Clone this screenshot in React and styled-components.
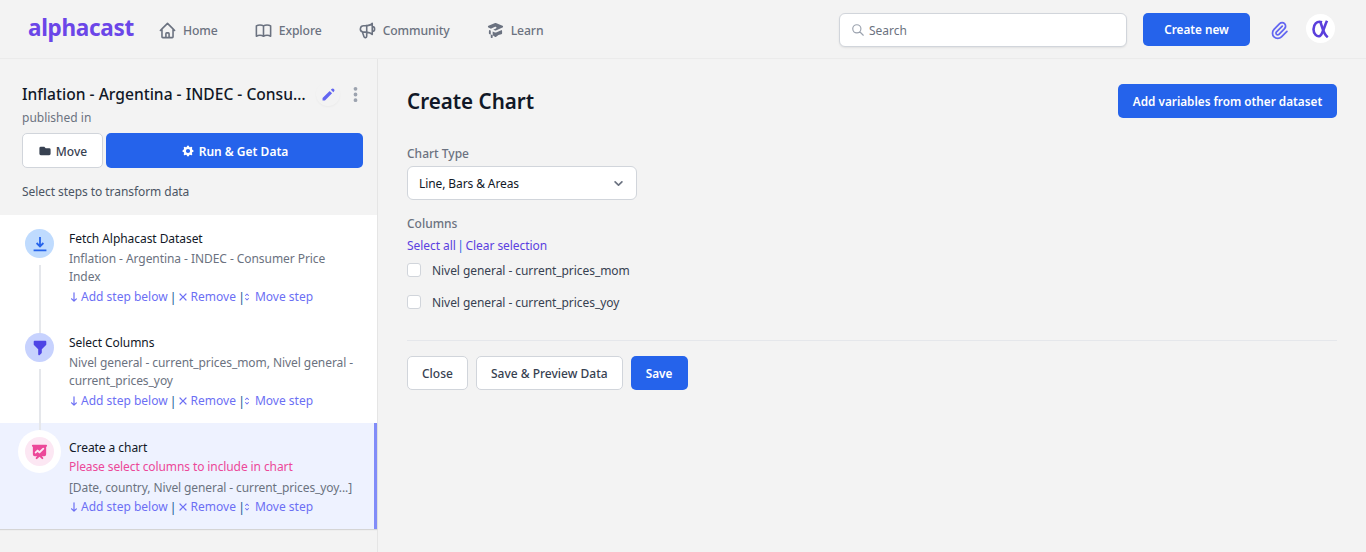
import React from 'react';
import styled, { createGlobalStyle } from 'styled-components';
import {
  HiOutlineHome,
  HiOutlineBookOpen,
  HiOutlineSpeakerphone,
  HiAcademicCap,
  HiOutlineSearch,
  HiOutlinePaperClip,
  HiPencil,
  HiDotsVertical,
  HiFolder,
  HiCog,
  HiFilter,
  HiPresentationChartLine,
  HiChevronDown,
  HiArrowNarrowDown,
  HiX,
  HiSelector,
} from 'react-icons/hi';

const GlobalStyle = createGlobalStyle`
  * { box-sizing: border-box; }
  html, body { margin: 0; height: 100%; }
  body {
    background: #f3f3f3;
    color: #111827;
    font-family: "Noto Sans", "Open Sans", sans-serif;
    font-size: 12px;
  }
`;

const navItems = [
  { label: 'Home', icon: HiOutlineHome },
  { label: 'Explore', icon: HiOutlineBookOpen },
  { label: 'Community', icon: HiOutlineSpeakerphone },
  { label: 'Learn', icon: HiAcademicCap },
];

const steps = [
  {
    title: 'Fetch Alphacast Dataset',
    detail: 'Inflation - Argentina - INDEC - Consumer Price Index',
    tone: 'blue',
  },
  {
    title: 'Select Columns',
    detail: 'Nivel general - current_prices_mom, Nivel general - current_prices_yoy',
    tone: 'indigo',
  },
  {
    title: 'Create a chart',
    warning: 'Please select columns to include in chart',
    detail: '[Date, country, Nivel general - current_prices_yoy...]',
    tone: 'pink',
    active: true,
  },
];

const columns = ['Nivel general - current_prices_mom', 'Nivel general - current_prices_yoy'];

const StepIcon = ({ tone }) => {
  if (tone === 'blue') {
    return (
      <svg width="16" height="16" viewBox="0 0 16 16" fill="none" stroke="currentColor" strokeWidth="1.8">
        <path d="M8 1v9.2M4.6 7 8 10.4 11.4 7M1.6 14.4h12.8" />
      </svg>
    );
  }
  if (tone === 'indigo') return <HiFilter size={18} />;
  return <HiPresentationChartLine size={19} />;
};

const App = () => (
  <Page>
    <GlobalStyle />
    <Header>
      <Logo>alphacast</Logo>
      <Nav>
        {navItems.map(({ label, icon: Icon }) => (
          <NavLink key={label}>
            <Icon size={19} />
            {label}
          </NavLink>
        ))}
      </Nav>
      <HeaderRight>
        <SearchBox>
          <HiOutlineSearch size={14} />
          <span>Search</span>
        </SearchBox>
        <CreateButton $width="107px" $height="33px">Create new</CreateButton>
        <ClipButton>
          <HiOutlinePaperClip size={21} />
        </ClipButton>
        <Avatar>
          <svg width="17" height="18" viewBox="0 0 17 18" fill="none" stroke="currentColor" strokeWidth="2.6">
            <path d="M10 2.2C4.5.4 1.5 4.8 1.5 9.2c0 5 3.6 8 6.4 6.8C10.5 15 12 7 15 .8" />
            <path d="M8.2 1.6c2 4 2.6 12 7.6 15.6" />
          </svg>
        </Avatar>
      </HeaderRight>
    </Header>
    <Body>
      <Sidebar>
        <SidebarTop>
          <TitleRow>
            <Title>Inflation - Argentina - INDEC - Consumer Price Index</Title>
            <EditButton>
              <HiPencil size={17} />
            </EditButton>
            <MoreButton>
              <HiDotsVertical size={19} />
            </MoreButton>
          </TitleRow>
          <Published>published in</Published>
          <ActionRow>
            <MoveButton>
              <HiFolder size={14} />
              Move
            </MoveButton>
            <RunButton>
              <HiCog size={14} />
              Run &amp; Get Data
            </RunButton>
          </ActionRow>
          <Hint>Select steps to transform data</Hint>
        </SidebarTop>
        <StepList>
          {steps.map((step, i) => (
            <Step key={step.title} $active={step.active}>
              <StepRail>
                <StepCircle $tone={step.tone} $active={step.active}>
                  <StepIcon tone={step.tone} />
                </StepCircle>
                {i < steps.length - 1 && <RailLine />}
              </StepRail>
              <StepBody $active={step.active}>
                <StepTitle>{step.title}</StepTitle>
                {step.warning && <StepWarning>{step.warning}</StepWarning>}
                <StepDetail $active={step.active}>{step.detail}</StepDetail>
                <StepLinks $active={step.active}>
                  <DownIcon size={12} />
                  <AddText>Add step below</AddText>
                  <Divider>|</Divider>
                  <RemoveIcon size={12} />
                  <RemoveText>Remove</RemoveText>
                  <Divider>|</Divider>
                  <MoveIcon size={10} />
                  <MoveText>Move step</MoveText>
                </StepLinks>
              </StepBody>
            </Step>
          ))}
        </StepList>
      </Sidebar>
      <Main>
        <MainHead>
          <Heading>Create Chart</Heading>
          <PrimaryButton $width="219px" $height="34px">Add variables from other dataset</PrimaryButton>
        </MainHead>
        <FieldLabel>Chart Type</FieldLabel>
        <SelectBox>
          Line, Bars &amp; Areas
          <HiChevronDown size={17} />
        </SelectBox>
        <ColumnsLabel>Columns</ColumnsLabel>
        <SelectLinks>
          <a>Select all</a>
          <b>|</b>
          <a>Clear selection</a>
        </SelectLinks>
        <ColumnList>
          {columns.map((name) => (
            <ColumnRow key={name}>
              <Check />
              {name}
            </ColumnRow>
          ))}
        </ColumnList>
        <Rule />
        <Footer>
          <GhostButton>Close</GhostButton>
          <GhostButton>Save &amp; Preview Data</GhostButton>
          <PrimaryButton $width="57px" $height="34px">Save</PrimaryButton>
        </Footer>
      </Main>
    </Body>
  </Page>
);

const Page = styled.div`
  height: 552px;
  overflow: hidden;
  display: flex;
  flex-direction: column;
`;

const Header = styled.header`
  height: 59px;
  flex: none;
  display: flex;
  align-items: center;
  padding: 2px 31px 0 28px;
  border-bottom: 1px solid #ebebeb;
`;

const Logo = styled.div`
  width: 130px;
  margin-top: -6px;
  color: #6b46e8;
  font-size: 22.5px;
  font-weight: 700;
  letter-spacing: -0.3px;
`;

const Nav = styled.nav`
  display: flex;
  gap: 36px;
`;

const NavLink = styled.a`
  display: flex;
  align-items: center;
  gap: 6px;
  color: #6b7280;
  font-size: 12.2px;
  font-weight: 500;
  letter-spacing: -0.1px;

  svg {
    color: #6b7280;
  }
`;

const HeaderRight = styled.div`
  margin-left: auto;
  display: flex;
  align-items: center;
`;

const SearchBox = styled.div`
  width: 288px;
  height: 34px;
  margin-right: 16px;
  padding: 0 11px;
  display: flex;
  align-items: center;
  gap: 4px;
  background: #fff;
  border: 1px solid #d1d5db;
  border-radius: 6px;
  box-shadow: 0 1px 2px rgba(0, 0, 0, 0.08);
  color: #6b7280;
  font-size: 12px;

  svg {
    color: #9ca3af;
  }
`;

const PrimaryButton = styled.button`
  width: ${(p) => p.$width};
  height: ${(p) => p.$height};
  padding: 0;
  flex: none;
  border: 0;
  border-radius: 5px;
  background: #2563eb;
  color: #fff;
  font-family: inherit;
  font-size: 11.75px;
  font-weight: 600;
`;

const CreateButton = styled(PrimaryButton)`
  margin-top: -2px;
`;

const ClipButton = styled.span`
  width: 21px;
  margin-left: 19px;
  display: flex;
  color: #6366f1;
`;

const Avatar = styled.div`
  width: 29px;
  height: 29px;
  margin-left: 16px;
  margin-top: -3px;
  display: flex;
  align-items: center;
  justify-content: center;
  border-radius: 50%;
  background: #fff;
  color: #5b3fdc;
`;

const Body = styled.div`
  flex: 1;
  display: flex;
  min-height: 0;
`;

const Sidebar = styled.aside`
  width: 378px;
  flex: none;
  border-right: 1px solid #e5e5e5;
`;

const SidebarTop = styled.div`
  height: 156px;
  padding: 24px 12px 0 22px;
`;

const TitleRow = styled.div`
  height: 22px;
  display: flex;
  align-items: center;
`;

const Title = styled.h1`
  width: 289px;
  margin: 0;
  overflow: hidden;
  white-space: nowrap;
  text-overflow: ellipsis;
  color: #111827;
  font-size: 15.6px;
  font-weight: 500;
`;

const EditButton = styled.span`
  width: 24px;
  height: 24px;
  margin-left: 5px;
  display: flex;
  align-items: center;
  justify-content: center;
  border-radius: 50%;
  box-shadow: 0 1px 2px rgba(0, 0, 0, 0.04);
  color: #6366f1;
`;

const MoreButton = styled.span`
  margin-left: 6px;
  display: flex;
  color: #9ca3af;
`;

const Published = styled.div`
  margin-top: 4px;
  color: #6b7280;
  font-size: 12px;
  line-height: 17px;
`;

const ActionRow = styled.div`
  margin-top: 7px;
  display: flex;
  gap: 3px;
`;

const MoveButton = styled.button`
  width: 81px;
  height: 35px;
  padding: 1px 0 0;
  display: flex;
  align-items: center;
  justify-content: center;
  gap: 4px;
  background: #fff;
  border: 1px solid #d1d5db;
  border-radius: 5px;
  color: #374151;
  font-family: inherit;
  font-size: 12px;
  font-weight: 500;
`;

const RunButton = styled.button`
  width: 257px;
  height: 35px;
  padding: 1px 0 0;
  display: flex;
  align-items: center;
  justify-content: center;
  gap: 4px;
  background: #2563eb;
  border: 0;
  border-radius: 5px;
  color: #fff;
  font-family: inherit;
  font-size: 12px;
  font-weight: 600;
`;

const Hint = styled.p`
  margin: 15px 0 0;
  color: #4b5563;
  font-size: 12px;
  line-height: 17px;
  letter-spacing: -0.06px;
`;

const StepList = styled.div`
  background: #fff;
`;

const Step = styled.div`
  display: flex;
  height: ${(p) => (p.$active ? '106px' : '104px')};
  padding: 14px 0 0 25px;
  background: ${(p) => (p.$active ? '#eef2ff' : '#fff')};
  border-right: ${(p) => (p.$active ? '3px solid #818cf8' : '0')};
  box-shadow: ${(p) => (p.$active ? '0 1px 1px rgba(0, 0, 0, 0.12)' : 'none')};
`;

const StepRail = styled.div`
  position: relative;
  width: 29px;
  flex: none;
`;

const toneStyles = {
  blue: 'background: #bfdbfe; color: #2563eb;',
  indigo: 'background: #c7d2fe; color: #4f46e5;',
  pink: 'background: #fce7f3; color: #ec4899;',
};

const StepCircle = styled.div`
  position: relative;
  z-index: 1;
  width: 29px;
  height: 29px;
  display: flex;
  align-items: center;
  justify-content: center;
  border-radius: 50%;
  ${(p) => toneStyles[p.$tone]}
  ${(p) => p.$active && 'box-shadow: 0 0 0 7px #fff;'}
`;

const RailLine = styled.div`
  position: absolute;
  z-index: 0;
  top: 36px;
  left: 13.5px;
  width: 2px;
  height: 88px;
  background: #e5e7eb;
`;

const StepBody = styled.div`
  margin-left: 15px;
  margin-top: ${(p) => (p.$active ? '1px' : '0')};
  width: 290px;
  font-size: 12px;
  line-height: 18px;
  letter-spacing: -0.06px;
`;

const StepTitle = styled.div`
  margin-top: 1px;
  margin-bottom: 2px;
  color: #111827;
`;

const StepWarning = styled.div`
  margin: -1px 0 3px;
  color: #ec4899;
  letter-spacing: -0.1px;
`;

const StepDetail = styled.div`
  color: #6b7280;
  white-space: normal;
  letter-spacing: ${(p) => (p.$active ? '-0.1px' : '-0.06px')};
`;

const StepLinks = styled.div`
  margin-top: ${(p) => (p.$active ? '1px' : '2px')};
  display: flex;
  align-items: center;
  color: #6c6ff4;
  font-size: 12px;
  letter-spacing: 0;
`;

const DownIcon = styled(HiArrowNarrowDown)`
  margin-left: -1px;
`;

const AddText = styled.span`
  margin-left: 1px;
`;

const Divider = styled.i`
  width: 3px;
  margin: 0 0 0 2px;
  color: #1f5f99;
  font-size: 13px;
  font-style: normal;
`;

const RemoveIcon = styled(HiX)`
  margin-left: 4px;
`;

const RemoveText = styled.span`
  margin-left: 2px;
`;

const MoveIcon = styled(HiSelector)`
  margin-left: 1px;
`;

const MoveText = styled.span`
  margin-left: 3px;
`;

const Main = styled.main`
  flex: 1;
  padding: 25px 29px 0;
`;

const MainHead = styled.div`
  display: flex;
  align-items: center;
  justify-content: space-between;
  height: 34px;
`;

const Heading = styled.h2`
  margin: 0;
  color: #111827;
  font-size: 20.6px;
  font-weight: 600;
`;

const FieldLabel = styled.div`
  margin-top: 27px;
  color: #6b7280;
  font-size: 12px;
  font-weight: 500;
  line-height: 17px;
`;

const SelectBox = styled.div`
  width: 230px;
  height: 34px;
  margin-top: 4px;
  padding: 0 9px 0 11px;
  display: flex;
  align-items: center;
  justify-content: space-between;
  background: #fff;
  border: 1px solid #d1d5db;
  border-radius: 6px;
  color: #111827;
  font-size: 12px;
  letter-spacing: -0.1px;

  svg {
    color: #6b7280;
  }
`;

const ColumnsLabel = styled(FieldLabel)`
  margin-top: 15px;
`;

const SelectLinks = styled.div`
  margin-top: 5px;
  display: flex;
  gap: 1.5px;
  color: #5b3fe0;
  font-size: 12px;
  line-height: 17px;
  letter-spacing: -0.05px;

  b {
    color: #2563eb;
    font-weight: 400;
  }
`;

const ColumnList = styled.div`
  margin-top: 0;
`;

const ColumnRow = styled.label`
  height: 32px;
  display: flex;
  align-items: center;
  gap: 11px;
  color: #374151;
  font-size: 12px;
  letter-spacing: -0.06px;
`;

const Check = styled.span`
  width: 14px;
  height: 14px;
  background: #fff;
  border: 1px solid #d1d5db;
  border-radius: 3px;
`;

const Rule = styled.hr`
  margin: 22px 0 0;
  border: 0;
  border-top: 1px solid #e5e7eb;
`;

const Footer = styled.div`
  margin-top: 15px;
  display: flex;
  gap: 8px;
`;

const GhostButton = styled.button`
  height: 34px;
  padding: 0 14px;
  background: #fff;
  border: 1px solid #d1d5db;
  border-radius: 5px;
  color: #374151;
  font-family: inherit;
  font-size: 12px;
  font-weight: 500;
`;

export default App;
